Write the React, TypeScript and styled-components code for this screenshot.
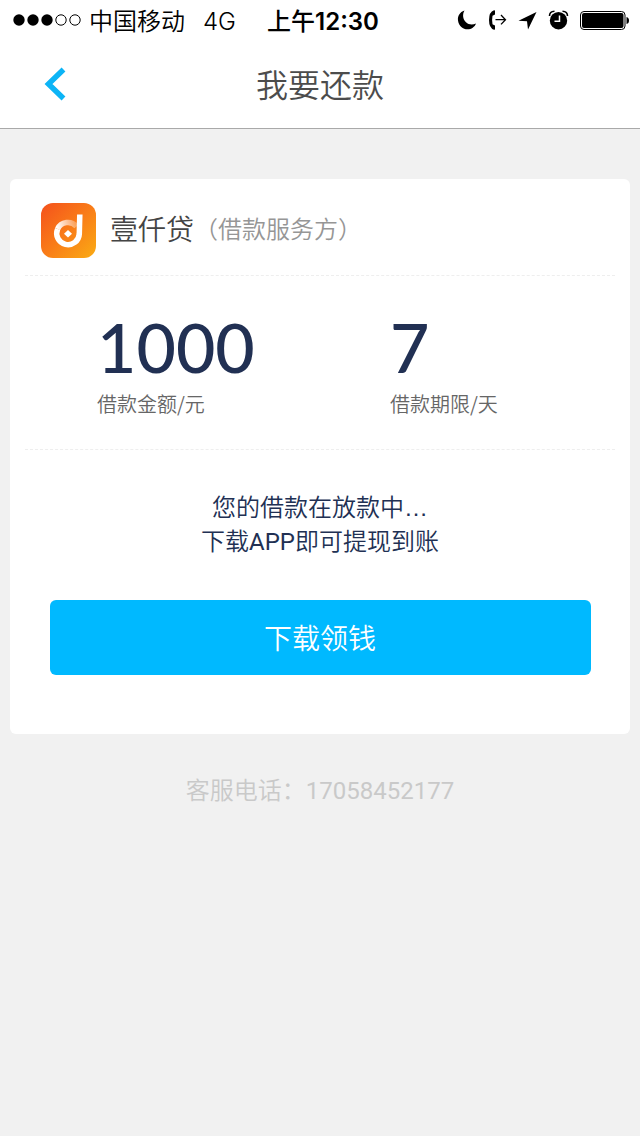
import React from "react";
import styled, { createGlobalStyle } from "styled-components";

const cjk = `"Noto Sans CJK SC", sans-serif`;

const GlobalStyle = createGlobalStyle`
  * { box-sizing: border-box; }
  body {
    margin: 0;
    background: #f1f1f1;
    font-family: Roboto, ${cjk};
    font-weight: 350;
  }
`;

const StatusBar = styled.div`
  display: flex;
  align-items: center;
  justify-content: space-between;
  height: 40px;
  padding: 0 11px 0 13px;
  background: #fff;
  color: #000;
  font: 350 24px/36px Inter, ${cjk};
`;

const StatusGroup = styled.div`
  display: flex;
  align-items: center;
  flex: 1;
  white-space: nowrap;
`;

const StatusIcons = styled(StatusGroup)`
  justify-content: flex-end;
`;

const StatusText = styled.span`
  padding-top: 3px;
`;

const Carrier = styled(StatusText)`
  margin: 0 18px 0 8px;
`;

const Clock = styled.time`
  padding: 3px 0 0 4px;
  font-weight: 500;
  span { font-weight: 600; }
`;

const Header = styled.header`
  display: grid;
  grid-template-columns: 110px 1fr 110px;
  align-items: center;
  height: 89px;
  background: #fff;
  border-bottom: 1px solid #a9a9a9;
`;

const BackButton = styled.button`
  display: flex;
  align-items: center;
  height: 88px;
  padding: 0 0 0 44px;
  border: 0;
  background: none;
`;

const Title = styled.h1`
  margin: 0;
  padding-bottom: 3px;
  color: #4c4c4c;
  font: 350 32px/48px ${cjk};
  text-align: center;
`;

const Card = styled.main`
  margin: 50px 10px 0;
  padding: 0 15px 59px;
  border-radius: 6px;
  background: #fff;
`;

const Provider = styled.section`
  display: flex;
  align-items: center;
  height: 97px;
  padding: 6px 16px 0;
  border-bottom: 1px dashed #eeeeee;
`;

const Name = styled.h2`
  margin: 0 0 4px 14px;
  color: #444;
  font: 350 28px/40px ${cjk};
`;

const Role = styled.span`
  margin-bottom: 4px;
  color: #969696;
  font: 350 24px/40px ${cjk};
`;

const Figures = styled.dl`
  display: grid;
  grid-template-columns: 1fr 1fr;
  height: 174px;
  margin: 0;
  padding: 31px 0 0 72px;
  column-gap: 68px;
  border-bottom: 1px dashed #eeeeee;
`;

const Figure = styled.div`
  display: flex;
  flex-direction: column-reverse;
  justify-content: flex-end;
  gap: 2px;
`;

const Amount = styled.dd`
  margin: 0;
  color: #213053;
  font: 500 68px/80px Lato, sans-serif;
`;

const Caption = styled.dt`
  color: #666;
  font: 350 20px/30px ${cjk};
`;

const Message = styled.p`
  margin: 41px 0;
  color: #213053;
  font-size: 24px;
  line-height: 34px;
  text-align: center;
`;

const Ellipsis = styled.span`
  font-family: "Liberation Sans", sans-serif;
`;

const Latin = styled.span`
  font-weight: 400;
`;

const DownloadButton = styled.button`
  display: block;
  width: calc(100% - 49px);
  height: 75px;
  margin: 0 auto;
  padding: 0 0 2px;
  border: 0;
  border-radius: 6px;
  background: #00b9ff;
  color: #fff;
  font: 350 28px/40px ${cjk};
`;

const Service = styled.footer`
  margin-top: 39px;
  color: #c9c9c9;
  font-size: 24px;
  line-height: 36px;
  text-align: center;
`;

const Phone = styled.a`
  color: inherit;
  font-weight: 400;
  text-decoration: none;
`;

function Signal() {
  return (
    <svg width="68" height="14" viewBox="0 0 68 14" aria-hidden="true">
      {[6, 20, 34].map((x) => <circle key={x} cx={x} cy="7" r="5.7" />)}
      {[48, 62].map((x) => (
        <circle key={x} cx={x} cy="7" r="5.2" fill="none" stroke="#000" strokeWidth="1" />
      ))}
    </svg>
  );
}

function DeviceIcons() {
  return (
    <svg width="172" height="24" viewBox="457 8 172 24" aria-hidden="true">
      <path d="M464.5 10.5C459.7 12 457.5 16 458 20.500C458.700 26 463 29.300 467.500 29.300C471.500 29.300 474.700 27 476 23.500C472.500 25.200 468.500 24.800 466 22.300C462.800 19.300 462.200 14.500 464.500 10.500Z" />
      <path d="M494 10.300Q489 12 489 20Q489 28 494 29.800L495 29.500V25.500L492.500 24.300Q491.700 20 492.500 15.700L495 14.500V10.500Z" />
      <path d="M495.500 19.700H505M501 15L505.500 19.700L501 24.400" fill="none" stroke="#000" strokeWidth="1.3" />
      <path d="M536.500 12L518.500 20.800L527 21.300L528 29.500Z" />
      <circle cx="558.500" cy="20.700" r="8.700" />
      <path d="M549.500 16Q549.500 11.500 554.500 11.300M562.500 11.300Q567.500 11.500 567.500 16" fill="none" stroke="#000" strokeWidth="1.600" />
      <path d="M559.500 15.500V21.300H554.500" fill="none" stroke="#fff" strokeWidth="1.500" />
      <rect x="580.500" y="11.500" width="44.500" height="18" rx="3.500" fill="#fff" stroke="#000" />
      <rect x="582" y="13" width="41.500" height="15" rx="2" />
      <path d="M626.500 17Q629 17.500 629 20.500Q629 23.500 626.500 24Z" />
    </svg>
  );
}

function BackIcon() {
  return (
    <svg width="22" height="34" viewBox="0 0 22 34" aria-hidden="true">
      <path d="M19.500 2.500L4.500 17L19.500 31.500" fill="none" stroke="#0cb4f6" strokeWidth="5.5" />
    </svg>
  );
}

function Logo() {
  return (
    <svg width="55" height="55" viewBox="0 0 55 55" aria-hidden="true">
      <defs>
        <linearGradient id="tile" x1="0" y1="0" x2="1" y2="1">
          <stop offset="0" stopColor="#f4511c" />
          <stop offset="0.5" stopColor="#f97c18" />
          <stop offset="1" stopColor="#faac14" />
        </linearGradient>
        <linearGradient id="fade" gradientUnits="userSpaceOnUse" x1="16" y1="26" x2="36" y2="22">
          <stop offset="0" stopColor="#fff" />
          <stop offset="1" stopColor="#fff" stopOpacity="0.25" />
        </linearGradient>
      </defs>
      <rect width="55" height="55" rx="12" fill="url(#tile)" />
      <path d="M16.600 26A11.300 11.300 0 0 1 35.500 23.500" fill="none" stroke="url(#fade)" strokeWidth="5.500" />
      <path d="M16.600 26A11.300 11.300 0 1 0 38.300 31L38.800 11.500" fill="none" stroke="#fff" strokeWidth="5.500" />
      <path d="M27 27L31 30.800L27 34.600L23 30.800Z" fill="#fff" />
    </svg>
  );
}

export default function App() {
  return (
    <>
      <GlobalStyle />
      <StatusBar>
        <StatusGroup>
          <Signal />
          <Carrier>中国移动</Carrier>
          <StatusText>4G</StatusText>
        </StatusGroup>
        <Clock>上午<span>12:30</span></Clock>
        <StatusIcons><DeviceIcons /></StatusIcons>
      </StatusBar>
      <Header>
        <BackButton type="button" aria-label="返回"><BackIcon /></BackButton>
        <Title>我要还款</Title>
      </Header>
      <Card>
        <Provider>
          <Logo />
          <Name>壹仟贷</Name>
          <Role>（借款服务方）</Role>
        </Provider>
        <Figures>
          <Figure>
            <Caption>借款金额/元</Caption>
            <Amount>1000</Amount>
          </Figure>
          <Figure>
            <Caption>借款期限/天</Caption>
            <Amount>7</Amount>
          </Figure>
        </Figures>
        <Message>
          您的借款在放款中<Ellipsis>…</Ellipsis>
          <br />
          下载<Latin>APP</Latin>即可提现到账
        </Message>
        <DownloadButton type="button">下载领钱</DownloadButton>
      </Card>
      <Service>
        客服电话：<Phone href="tel:17058452177">17058452177</Phone>
      </Service>
    </>
  );
}
